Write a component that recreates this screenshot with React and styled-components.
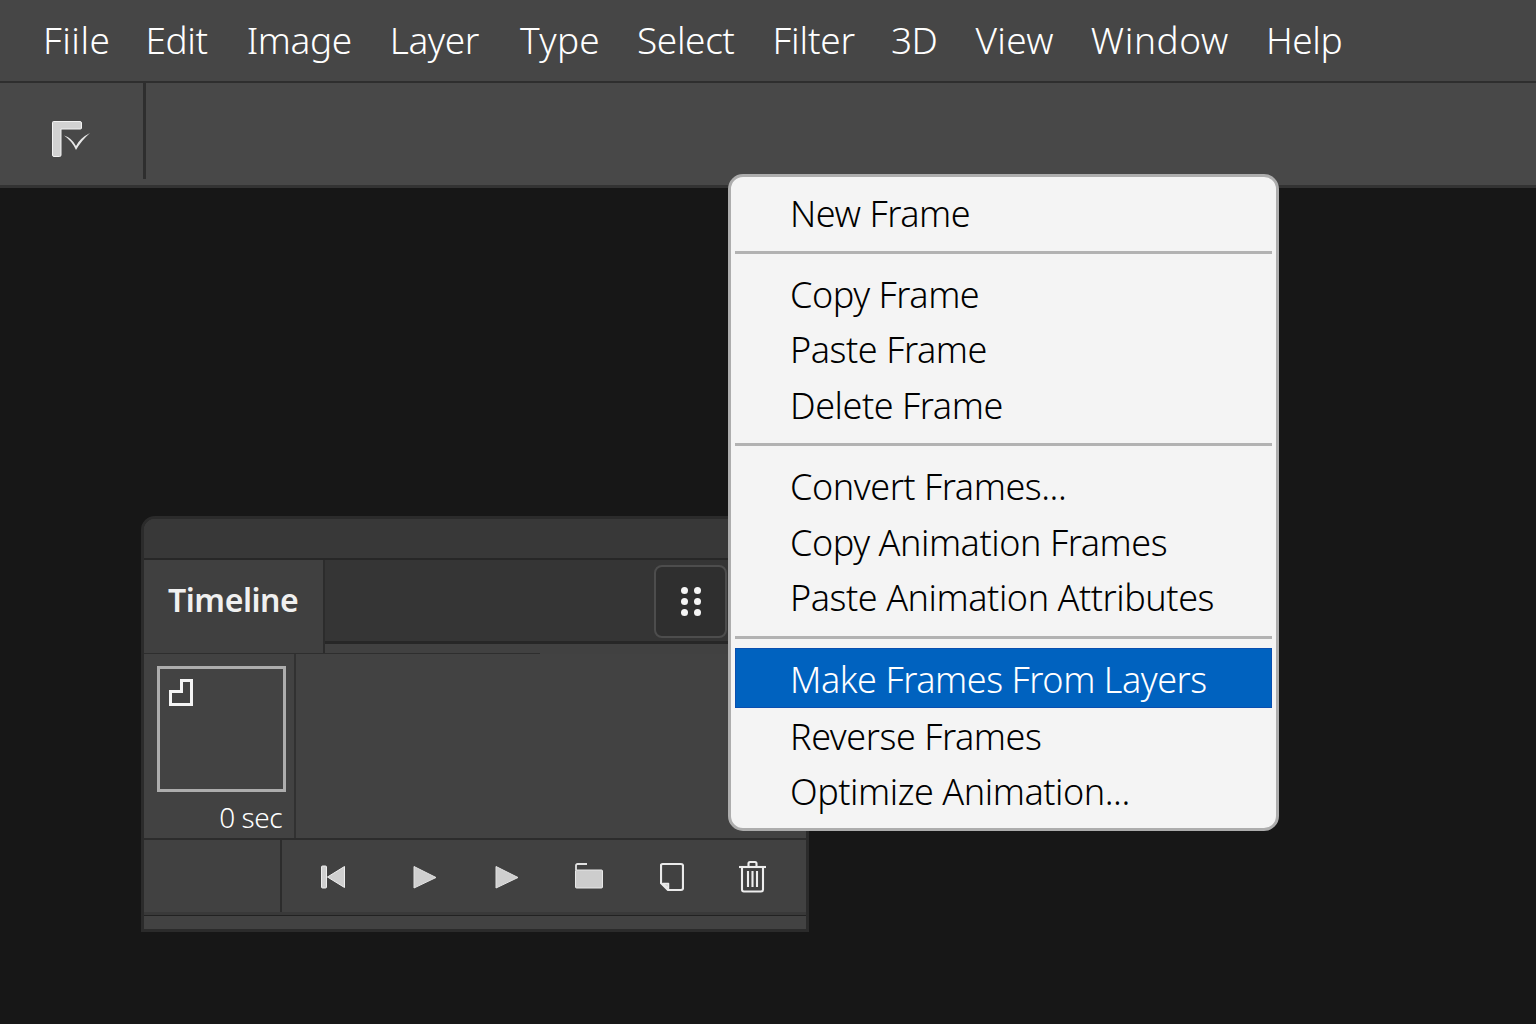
import React from 'react'
import styled, { createGlobalStyle } from 'styled-components'

const menus = [
    { label: 'Fiile', gap: 35, track: 0.5 },
    { label: 'Edit', gap: 39, track: -0.4 },
    { label: 'Image', gap: 38, track: -0.4 },
    { label: 'Layer', gap: 41, track: -0.4 },
    { label: 'Type', gap: 37, track: 0.3 },
    { label: 'Select', gap: 38, track: -0.4 },
    { label: 'Filter', gap: 36, track: -0.2 },
    { label: '3D', gap: 38, track: -0.4 },
    { label: 'View', gap: 37, track: 0.3 },
    { label: 'Window', gap: 37, track: 0.6 },
    { label: 'Help', gap: 0, track: -0.4 },
]

const frameMenu = [
    { top: 0, bottom: 9, items: ['New Frame'] },
    { top: 13, bottom: 10, items: ['Copy Frame', 'Paste Frame', 'Delete Frame'] },
    { top: 13, bottom: 10, items: ['Convert Frames...', 'Copy Animation Frames', 'Paste Animation Attributes'] },
    { top: 9, bottom: 0, items: ['Make Frames From Layers', 'Reverse Frames', 'Optimize Animation...'] },
]

function ToolIcon() {
    return (
        <svg width="42" height="38" viewBox="0 0 42 38">
            <path d="M2.500 1.500H29a1.500 1.500 0 0 1 1.500 1.500v5a1 1 0 0 1-1 1H10v26a1.500 1.500 0 0 1-1.500 1.500H3a1.500 1.500 0 0 1-1.500-1.500V2.500a1 1 0 0 1 1-1z" fill="#d2d2d2" stroke="#f2f2f2" />
            <path d="M13 15.500 Q21 18 25 26 Q29 18 39 13 Q30 21 25 30 Q21 21 13 15.500z" fill="#e8e8e8" />
        </svg>
    )
}

function FirstFrameIcon() {
    return (
        <svg width="24" height="40" viewBox="0 0 24 40">
            <rect x="0.500" y="10" width="5" height="22" rx="1" fill="#d0d0d0" stroke="#eee" />
            <path d="M6.500 21 23.500 10.500v21z" fill="#cfcfcf" stroke="#eee" strokeLinejoin="round" />
        </svg>
    )
}

function PlayIcon() {
    return (
        <svg width="24" height="40" viewBox="0 0 24 40">
            <path d="M1 10.500 23 21.500 1 32z" fill="#cfcfcf" stroke="#e2e2e2" strokeLinejoin="round" />
        </svg>
    )
}

function FolderIcon() {
    return (
        <svg width="28" height="40" viewBox="0 0 28 40">
            <path d="M1 14V9.500a1.500 1.500 0 0 1 1.500-1.500H12" fill="none" stroke="#e2e2e2" strokeWidth="1.800" />
            <rect x="0.500" y="14" width="27" height="18" rx="1" fill="#cdcdcd" stroke="#e8e8e8" />
        </svg>
    )
}

function NewFrameIcon() {
    return (
        <svg width="24" height="40" viewBox="0 0 24 40">
            <path d="M8 34H21a2 2 0 0 0 2-2V10a2 2 0 0 0-2-2H2.500a1.500 1.500 0 0 0-1.500 1.500V27z" fill="none" stroke="#eaeaea" strokeWidth="2.200" strokeLinejoin="round" />
            <path d="M3 27.500h5.500v5z" fill="#cfcfcf" stroke="#eaeaea" strokeWidth="1.500" strokeLinejoin="round" />
        </svg>
    )
}

function TrashIcon() {
    return (
        <svg width="27" height="40" viewBox="0 0 27 40" fill="none" stroke="#eeeeee" strokeWidth="2.100">
            <path d="M0 11h27" />
            <path d="M9.500 11V7.500A1.500 1.500 0 0 1 11 6h5a1.500 1.500 0 0 1 1.500 1.500V11" />
            <path d="M3 11v22.500a2 2 0 0 0 2 2h17a2 2 0 0 0 2-2V11" />
            <path d="M9 15v16M13.500 15v16M18 15v16" />
        </svg>
    )
}

function App() {
    return (
        <Page>
            <GlobalStyle />
            <MenuBar>
                {menus.map((m) => (
                    <MenuLabel key={m.label} $gap={m.gap} $track={m.track}>{m.label}</MenuLabel>
                ))}
            </MenuBar>
            <OptionsBar>
                <ToolCell>
                    <ToolIcon />
                </ToolCell>
            </OptionsBar>
            <Stage>
                <Panel>
                    <PanelHeader />
                    <TabRow>
                        <Tab>Timeline</Tab>
                        <TabFill>
                            <PanelMenuButton>
                                <DotGrid>
                                    {[0, 1, 2, 3, 4, 5].map((i) => <Dot key={i} />)}
                                </DotGrid>
                            </PanelMenuButton>
                        </TabFill>
                    </TabRow>
                    <HairLine />
                    <FramesRow>
                        <FrameCell>
                            <Thumb>
                                <svg width="24" height="27" viewBox="0 0 24 27">
                                    <path d="M1.500 12.500H12.500V1.500H22.500V25.500H1.500z" fill="none" stroke="#f4f4f4" strokeWidth="3" />
                                </svg>
                            </Thumb>
                            <Delay>0 sec</Delay>
                        </FrameCell>
                    </FramesRow>
                    <ControlsRow>
                        <LoopCell />
                        <Controls>
                            <Slot $left={0}><FirstFrameIcon /></Slot>
                            <Slot $left={68}><PlayIcon /></Slot>
                            <Slot $left={58}><PlayIcon /></Slot>
                            <Slot $left={56}><FolderIcon /></Slot>
                            <Slot $left={57}><NewFrameIcon /></Slot>
                            <Slot $left={55}><TrashIcon /></Slot>
                        </Controls>
                    </ControlsRow>
                    <FooterStrip />
                </Panel>
                <ContextMenu>
                    {frameMenu.map((group, i) => (
                        <Group key={i} $rule={i > 0} $top={group.top} $bottom={group.bottom}>
                            {group.items.map((item) => (
                                <Item key={item} $active={item === 'Make Frames From Layers'}>{item}</Item>
                            ))}
                        </Group>
                    ))}
                </ContextMenu>
            </Stage>
        </Page>
    )
}

const GlobalStyle = createGlobalStyle`
    html, body {
        margin: 0;
        padding: 0;
        background: #171717;
    }
    body {
        font-family: "Noto Sans", "Open Sans", "Liberation Sans", sans-serif;
    }
`

const Page = styled.div`
    width: 1536px;
    height: 1024px;
    overflow: hidden;
    display: flex;
    flex-direction: column;
`

const MenuBar = styled.div`
    height: 83px;
    flex: none;
    box-sizing: border-box;
    display: flex;
    align-items: center;
    padding: 0 0 2px 43px;
    background: #464646;
    border-bottom: 2px solid #2e2e2e;
`

const MenuLabel = styled.span`
    margin-right: ${(p) => p.$gap}px;
    color: #ffffff;
    font-size: 37px;
    font-weight: 300;
    letter-spacing: ${(p) => p.$track}px;
`

const OptionsBar = styled.div`
    height: 102px;
    flex: none;
    display: flex;
    background: #484848;
    border-bottom: 3px solid #333333;
`

const ToolCell = styled.div`
    width: 146px;
    height: 96px;
    box-sizing: border-box;
    padding: 15px 0 0 51px;
    display: flex;
    align-items: center;
    border-right: 3px solid #2e2e2e;
`

const Stage = styled.div`
    position: relative;
    flex: 1;
    padding: 328px 0 0 141px;
    background: #171717;
`

const Panel = styled.div`
    width: 668px;
    height: 416px;
    box-sizing: border-box;
    display: flex;
    flex-direction: column;
    background: #414141;
    border: 3px solid #2b2b2b;
    border-radius: 14px 0 0 0;
`

const PanelHeader = styled.div`
    height: 39px;
    flex: none;
    background: #383838;
    border-bottom: 2px solid #272727;
    border-radius: 11px 0 0 0;
`

const TabRow = styled.div`
    height: 93px;
    flex: none;
    display: flex;
`

const Tab = styled.div`
    width: 181px;
    flex: none;
    box-sizing: border-box;
    padding: 18px 0 0 24px;
    color: #f0f0f0;
    font-size: 32px;
    font-weight: 600;
    letter-spacing: -0.45px;
    background: #404040;
    border-right: 2px solid #2c2c2c;
`

const TabFill = styled.div`
    flex: 1;
    height: 84px;
    display: flex;
    padding-left: 329px;
    box-sizing: border-box;
    background: #353535;
    border-bottom: 3px solid #272727;
`

const PanelMenuButton = styled.div`
    width: 73px;
    height: 73px;
    margin-top: 5px;
    flex: none;
    box-sizing: border-box;
    display: flex;
    align-items: center;
    justify-content: center;
    background: #2f2f2f;
    border: 2px solid #4d4d4d;
    border-radius: 8px;
`

const DotGrid = styled.div`
    display: grid;
    grid-template-columns: 7px 7px;
    grid-auto-rows: 7px;
    gap: 4px 6px;
`

const Dot = styled.span`
    border-radius: 50%;
    background: #f5f5f5;
`

const HairLine = styled.div`
    width: 396px;
    height: 1px;
    flex: none;
    background: #2e2e2e;
`

const FramesRow = styled.div`
    height: 184px;
    flex: none;
    display: flex;
    background: #424242;
    border-bottom: 2px solid #2c2c2c;
`

const FrameCell = styled.div`
    width: 152px;
    box-sizing: border-box;
    display: flex;
    flex-direction: column;
    padding: 12px 12px 0 13px;
    border-right: 2px solid #313131;
`

const Thumb = styled.div`
    width: 129px;
    height: 126px;
    flex: none;
    box-sizing: border-box;
    padding: 10px 0 0 9px;
    background: #434343;
    border: 3px solid #adadad;
`

const Delay = styled.div`
    margin-top: 7px;
    text-align: right;
    color: #ffffff;
    font-size: 28px;
    font-weight: 300;
    line-height: 36px;
    letter-spacing: -0.5px;
`

const ControlsRow = styled.div`
    height: 72px;
    flex: none;
    display: flex;
    border-bottom: 3px solid #393939;
`

const LoopCell = styled.div`
    width: 136px;
    flex: none;
    border-right: 2px solid #2c2c2c;
`

const Controls = styled.div`
    flex: 1;
    display: flex;
    align-items: center;
    padding-left: 39px;
`

const Slot = styled.span`
    display: flex;
    margin-left: ${(p) => p.$left}px;
`

const FooterStrip = styled.div`
    flex: 1;
    background: #424242;
    border-top: 1px solid #222222;
`

const ContextMenu = styled.div`
    position: absolute;
    left: 728px;
    top: -14px;
    width: 551px;
    height: 657px;
    box-sizing: border-box;
    padding: 9px 4px 0;
    background: #f4f4f4;
    border: 3px solid #adadad;
    border-radius: 15px;
`

const Group = styled.div`
    padding: ${(p) => p.$top}px 0 ${(p) => p.$bottom}px;
    border-top: ${(p) => (p.$rule ? '3px solid #b2b2b2' : 'none')};
`

const Item = styled.div`
    height: ${(p) => (p.$active ? 60 : 55.5)}px;
    box-sizing: border-box;
    margin-bottom: ${(p) => (p.$active ? 1 : 0)}px;
    padding: ${(p) => (p.$active ? 3 : 0)}px 0 0 55px;
    display: flex;
    align-items: center;
    font-size: 36px;
    font-weight: 300;
    letter-spacing: -0.45px;
    color: ${(p) => (p.$active ? '#ffffff' : '#000000')};
    background: ${(p) => (p.$active ? '#0062bf' : 'transparent')};
    box-shadow: ${(p) => (p.$active ? 'inset 0 0 0 1px #0a4fb0' : 'none')};
`

export default App
